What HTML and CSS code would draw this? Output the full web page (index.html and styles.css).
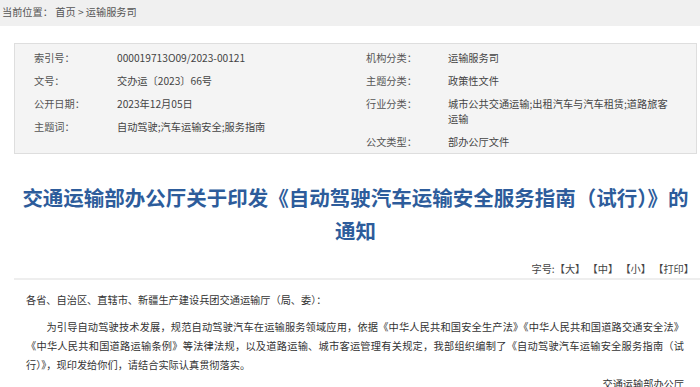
FILE: index.html
```html
<!DOCTYPE html>
<html lang="zh-CN">
<head>
  <meta charset="UTF-8" />
  <meta name="viewport" content="width=device-width, initial-scale=1.0"/>
  <title>交通运输部办公厅关于印发《自动驾驶汽车运输安全服务指南（试行）》的通知</title>
  <link rel="stylesheet" href="styles.css">
</head>
<body>
  <div class="crumb">当前位置： 首页 &gt; 运输服务司</div>

  <div class="page">
    <div class="info">
      <div class="info-col info-left">
        <div class="row"><span class="lbl">索引号：</span><span class="val">000019713O09/2023-00121</span></div>
        <div class="row"><span class="lbl">文号：</span><span class="val">交办运〔2023〕66号</span></div>
        <div class="row"><span class="lbl">公开日期：</span><span class="val">2023年12月05日</span></div>
        <div class="row"><span class="lbl">主题词：</span><span class="val">自动驾驶;汽车运输安全;服务指南</span></div>
      </div>
      <div class="info-col info-right">
        <div class="row"><span class="lbl">机构分类：</span><span class="val">运输服务司</span></div>
        <div class="row"><span class="lbl">主题分类：</span><span class="val">政策性文件</span></div>
        <div class="row"><span class="lbl">行业分类：</span><span class="val">城市公共交通运输;出租汽车与汽车租赁;道路旅客运输</span></div>
        <div class="row"><span class="lbl">公文类型：</span><span class="val">部办公厅文件</span></div>
      </div>
    </div>

    <h1 class="title">交通运输部办公厅关于印发《自动驾驶汽车运输安全服务指南（试行）》的通知</h1>

    <div class="tools">字号:【大】 【中】 【小】 【打印】</div>

    <div class="content">
      <p class="to">各省、自治区、直辖市、新疆生产建设兵团交通运输厅（局、委）：</p>
      <p class="para">为引导自动驾驶技术发展，规范自动驾驶汽车在运输服务领域应用，依据《中华人民共和国安全生产法》《中华人民共和国道路交通安全法》《中华人民共和国道路运输条例》等法律法规，以及道路运输、城市客运管理有关规定，我部组织编制了《自动驾驶汽车运输安全服务指南（试行）》，现印发给你们，请结合实际认真贯彻落实。</p>
      <p class="sign">交通运输部办公厅</p>
    </div>
  </div>
</body>
</html>
```

FILE: styles.css
```css
* {
  box-sizing: border-box;
}

body {
  margin: 0;
  background-color: #f0f0f0;
  color: #444;
  font-family: "Noto Sans CJK SC", "Noto Sans", sans-serif;
  font-size: 10.2px;
  height: 387px;
  overflow: hidden;
}

.crumb {
  height: 26px;
  padding: 4px 0 0 2px;
  line-height: 15px;
  color: #555;
}

.page {
  background: white;
  padding: 17px 3px 0 14px;
  min-height: 400px;
}

.info {
  display: flex;
  border: 1px solid #dedede;
  background: #f4f4f4;
  padding: 2px 0 0 0;
  height: 111px;
}

.info-col {
  flex: none;
}

.info-left {
  width: 351px;
  padding-left: 19px;
}

.info-right {
  flex: 1;
}

.row {
  display: flex;
  padding: 4px 0;
  line-height: 15px;
}

.lbl {
  flex: none;
  color: #555;
}

.info-left .lbl {
  width: 83px;
}

.info-right .lbl {
  width: 82px;
}

.info-right .val {
  width: 222px;
}

.val {
  color: #444;
}

.title {
  margin: 27px 0 0 0;
  text-align: center;
  color: #2d5c9b;
  font-size: 20.5px;
  line-height: 33px;
  font-weight: bold;
}

.tools {
  margin: 12px -3px 0 0;
  padding-right: 6px;
  text-align: right;
  line-height: 19px;
  color: #444;
  white-space: pre;
  border-bottom: 2px solid #eeeeee;
}

.content {
  padding: 10px 13px 0 12px;
  color: #333;
}

.content p {
  margin: 0;
  line-height: 19px;
}

.to {
  margin-bottom: 8px !important;
}

.para {
  text-indent: 2em;
  text-align: justify;
}

.sign {
  text-align: right;
}
```
